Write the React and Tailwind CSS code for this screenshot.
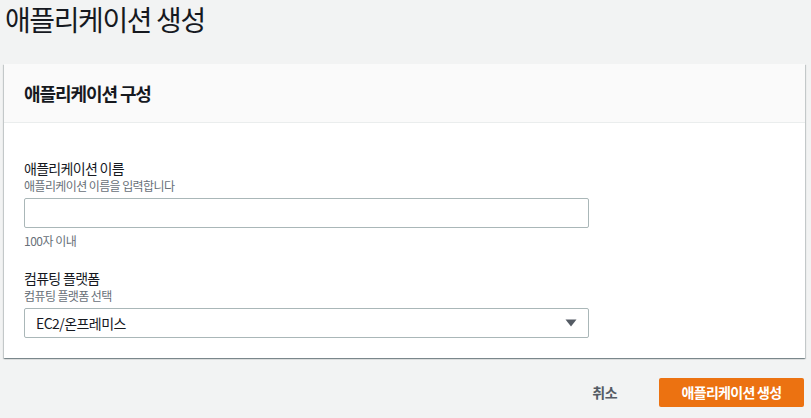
import React from "react";

const KR = { fontFamily: '"Noto Sans CJK KR", "Noto Sans", sans-serif' };

export default function App() {
  return (
    <div className="w-full h-[418px] bg-[#f2f3f3] text-[#16191f] overflow-hidden" style={KR}>
      <div className="h-[64px] pl-[5px]">
        <h1 className="text-[28px] leading-[38px] font-normal tracking-[-0.05em]">애플리케이션 생성</h1>
      </div>
      <div className="ml-[4px] mr-[6px] bg-white shadow-[0_1px_1px_0_rgba(0,28,36,0.3),1px_1px_1px_0_rgba(0,28,36,0.15),-1px_1px_1px_0_rgba(0,28,36,0.15)]">
        <div className="h-[59px] bg-[#fafafa] border-b border-[#eaeded] flex items-center pl-[20px]">
          <h2 className="text-[18px] font-bold leading-[22px] tracking-[-0.06em]">애플리케이션 구성</h2>
        </div>
        <div className="pt-[35px] pb-[20px] pl-[20px]">
          <div className="flex flex-col">
            <label className="text-[14px] leading-[20px] tracking-[-0.05em]">애플리케이션 이름</label>
            <span className="text-[12px] leading-[16px] text-[#687078] tracking-[-0.05em]">애플리케이션 이름을 입력합니다</span>
            <input className="mt-[4px] w-[565px] h-[30px] border border-[#aab7b8] rounded-[2px] bg-white px-[10px] text-[14px] outline-none" />
            <span className="mt-[5px] text-[12px] leading-[16px] text-[#687078] tracking-[-0.04em]">100자 이내</span>
          </div>
          <div className="flex flex-col mt-[19px]">
            <label className="text-[14px] leading-[20px] tracking-[-0.05em]">컴퓨팅 플랫폼</label>
            <span className="text-[12px] leading-[16px] text-[#687078] tracking-[-0.05em]">컴퓨팅 플랫폼 선택</span>
            <div className="mt-[4px] w-[565px] h-[30px] border border-[#aab7b8] rounded-[2px] bg-white flex items-center justify-between pl-[11px] pr-[10px]">
              <span className="text-[14px] leading-[20px] tracking-[-0.04em]">EC2/온프레미스</span>
              <svg width="12" height="8" viewBox="0 0 12 8" className="mr-[1px]">
                <path d="M0.5 0.5 L11.5 0.5 L6 7.5 Z" fill="#545b64" />
              </svg>
            </div>
          </div>
        </div>
      </div>
      <div className="flex justify-end items-center mt-[20px] mr-[7px]">
        <button className="text-[14px] font-bold text-[#545b64] tracking-[-0.04em] mr-[42px]">취소</button>
        <button className="w-[145px] h-[29px] bg-[#ec7211] rounded-[2px] text-white text-[14px] font-bold tracking-[-0.05em] flex items-center justify-center">애플리케이션 생성</button>
      </div>
    </div>
  );
}
